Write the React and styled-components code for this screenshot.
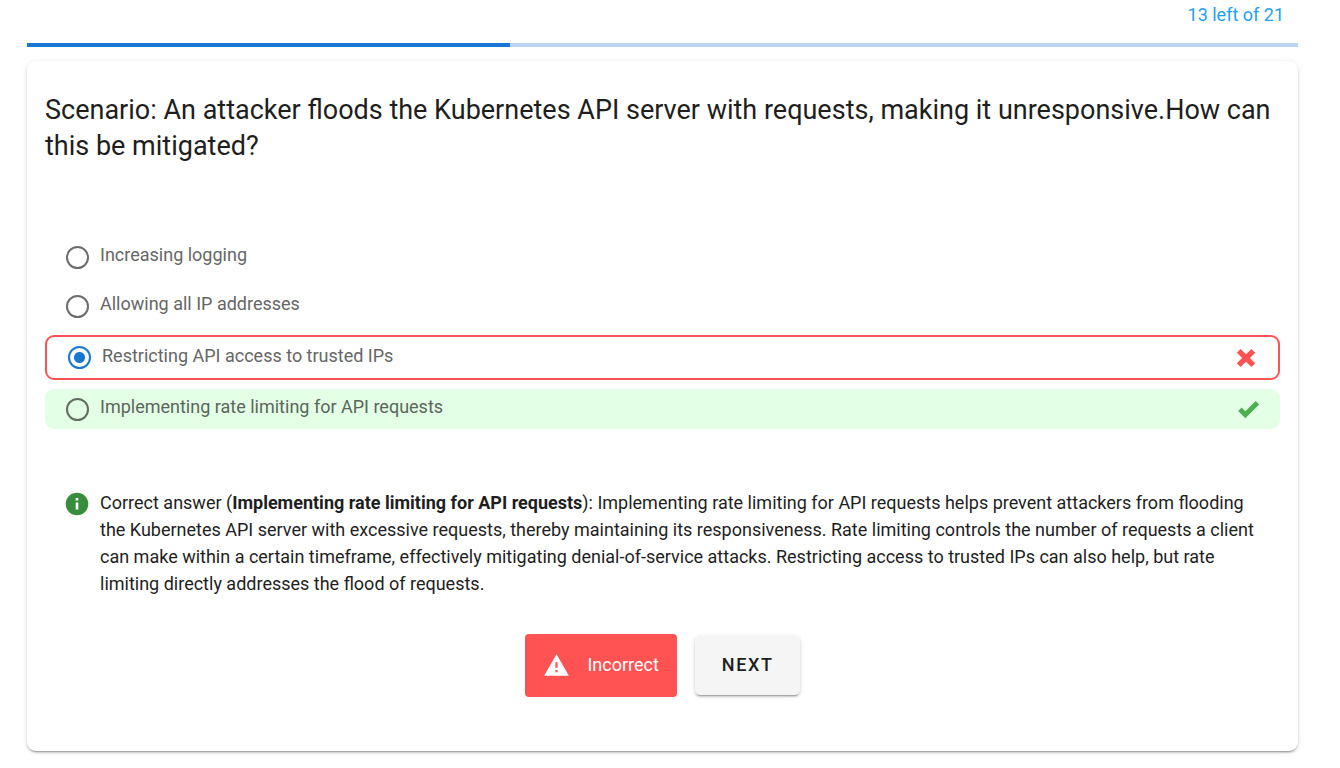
import React, { useState } from "react";
import styled, { createGlobalStyle, css } from "styled-components";

const GlobalStyle = createGlobalStyle`
  *, *::before, *::after { box-sizing: border-box; }
  body {
    margin: 0;
    background: #fff;
    color: #1e1e1e;
    font-family: Roboto, "Liberation Sans", sans-serif;
    font-size: 18px;
    line-height: 27px;
  }
`;

const Page = styled.main`
  padding: 0 42px 16px 27px;
`;

const Counter = styled.div`
  padding: 1px 14px 15px;
  text-align: right;
  color: #1da1f2;
`;

const Track = styled.div`
  height: 4px;
  background: #b9d5f2;
`;

const Bar = styled.div`
  height: 100%;
  background: #1976d2;
`;

const Card = styled.section`
  margin-top: 14px;
  padding: 31px 18px 54px;
  border-radius: 9px;
  background: #fff;
  box-shadow: 0 3px 1px -2px rgba(0, 0, 0, 0.2), 0 2px 2px 0 rgba(0, 0, 0, 0.14),
    0 1px 5px 0 rgba(0, 0, 0, 0.12);
`;

const Question = styled.h1`
  margin: 0;
  font-size: 27px;
  line-height: 36px;
  font-weight: 400;
`;

const Options = styled.fieldset`
  display: flex;
  flex-direction: column;
  gap: 9px;
  margin: 73px 0 0;
  padding: 0;
  border: 0;
`;

const Option = styled.label`
  display: flex;
  align-items: center;
  min-height: 40px;
  padding: 0 20px 0 21px;
  border-radius: 9px;
  color: #666;
  cursor: pointer;
  ${(p) =>
    p.$state === "wrong" &&
    css`
      min-height: 45px;
      border: 2px solid #ff5252;
    `}
  ${(p) =>
    p.$state === "right" &&
    css`
      background: #e3ffe5;
      color: #5a665b;
    `}
`;

const Radio = styled.input`
  appearance: none;
  flex: none;
  width: 23px;
  height: 23px;
  margin: 0;
  border: 2px solid #6c6c6c;
  border-radius: 50%;
  ${(p) =>
    p.$tinted &&
    css`
      border-color: #606d61;
    `}
  &:checked {
    border-color: #1976d2;
    background: radial-gradient(circle, #1976d2 5px, transparent 6px);
  }
`;

const OptionText = styled.span`
  flex: 1;
  padding: 0 11px 5px;
`;

const Explanation = styled.div`
  display: flex;
  align-items: flex-start;
  gap: 11px;
  margin-top: 60px;
  padding: 0 20px;
`;

const InfoIcon = styled.svg`
  flex: none;
  width: 24px;
  height: 24px;
  margin-top: 3px;
`;

const ExplanationText = styled.p`
  margin: 0;
`;

const Actions = styled.div`
  display: flex;
  justify-content: center;
  align-items: center;
  gap: 18px;
  margin-top: 37px;
`;

const Result = styled.div`
  display: flex;
  align-items: center;
  gap: 17px;
  height: 63px;
  padding: 0 18px;
  border-radius: 4px;
  background: #ff5252;
  color: #fff;
`;

const ResultText = styled.span`
  padding-bottom: 2px;
`;

const NextButton = styled.button`
  height: 59px;
  padding: 0 26px 2px 27px;
  border: 0;
  border-radius: 5px;
  background: #f5f5f5;
  color: #1e1e1e;
  font: inherit;
  font-weight: 500;
  letter-spacing: 0.09em;
  text-transform: uppercase;
  cursor: pointer;
  box-shadow: 0 3px 1px -2px rgba(0, 0, 0, 0.2), 0 2px 2px 0 rgba(0, 0, 0, 0.14),
    0 1px 5px 0 rgba(0, 0, 0, 0.12);
`;

const CrossIcon = () => (
  <svg width="22" height="20" viewBox="0 0 22 20" aria-hidden="true">
    <path
      d="M4.6 .9 10 6.2l5.4-5.3 3.8 3.8L13.9 10l5.3 5.3-3.8 3.8L10 13.8l-5.4 5.3-3.8-3.8L6.1 10 .8 4.7z"
      fill="#ff5252"
    />
  </svg>
);

const CheckIcon = () => (
  <svg width="22" height="20" viewBox="0 0 22 20" aria-hidden="true">
    <path d="M.2 12 3.6 8.6 7.3 12.3 17.7 1.9 21.2 5.4 7.3 19.2z" fill="#4caf50" />
  </svg>
);

const WarningIcon = () => (
  <svg width="27" height="27" viewBox="0 0 24 24" aria-hidden="true">
    <path d="M13 14h-2V9h2m0 9h-2v-2h2M1 21h22L12 2 1 21z" fill="#fff" />
  </svg>
);

const answers = [
  { text: "Increasing logging" },
  { text: "Allowing all IP addresses" },
  { text: "Restricting API access to trusted IPs", state: "wrong" },
  { text: "Implementing rate limiting for API requests", state: "right" },
];

const total = 21;
const left = 13;

export default function App() {
  const [chosen, setChosen] = useState(2);
  const progress = Math.floor(((total - left) / total) * 100);

  return (
    <>
      <GlobalStyle />
      <Page>
        <Counter>
          {left} left of {total}
        </Counter>
        <Track>
          <Bar style={{ width: `${progress}%` }} />
        </Track>
        <Card>
          <Question>
            Scenario: An attacker floods the Kubernetes API server with requests, making it
            unresponsive.How can this be mitigated?
          </Question>
          <Options>
            {answers.map((answer, i) => (
              <Option key={answer.text} $state={answer.state}>
                <Radio
                  type="radio"
                  name="answer"
                  checked={chosen === i}
                  onChange={() => setChosen(i)}
                  $tinted={answer.state === "right"}
                />
                <OptionText>{answer.text}</OptionText>
                {answer.state === "wrong" && <CrossIcon />}
                {answer.state === "right" && <CheckIcon />}
              </Option>
            ))}
          </Options>
          <Explanation>
            <InfoIcon viewBox="0 0 24 24" aria-hidden="true">
              <circle cx="12" cy="12" r="11.3" fill="#388e3c" />
              <path d="M10.7 6h2.6v2.5h-2.6zM10.7 10.5h2.6v7h-2.6z" fill="#fff" />
            </InfoIcon>
            <ExplanationText>
              Correct answer (<b>Implementing rate limiting for API requests</b>): Implementing rate
              limiting for API requests helps prevent attackers from flooding the Kubernetes API
              server with excessive requests, thereby maintaining its responsiveness. Rate limiting
              controls the number of requests a client can make within a certain timeframe,
              effectively mitigating denial-of-service attacks. Restricting access to trusted IPs can
              also help, but rate limiting directly addresses the flood of requests.
            </ExplanationText>
          </Explanation>
          <Actions>
            <Result role="status">
              <WarningIcon />
              <ResultText>Incorrect</ResultText>
            </Result>
            <NextButton type="button">Next</NextButton>
          </Actions>
        </Card>
      </Page>
    </>
  );
}
